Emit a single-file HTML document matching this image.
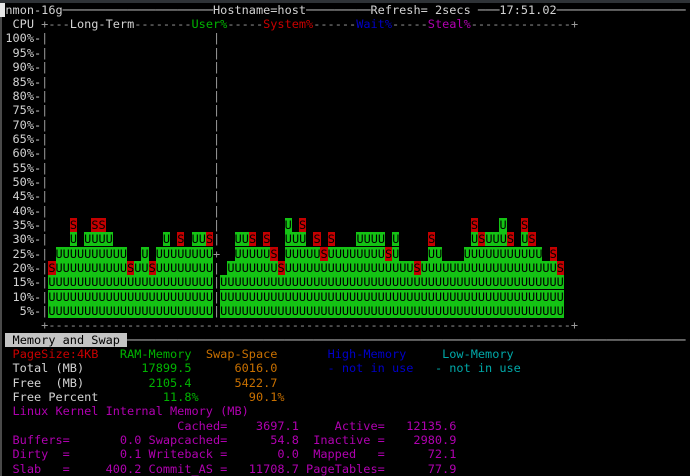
<!DOCTYPE html>
<html><head><meta charset="utf-8">
<style>
html,body{margin:0;padding:0;background:#000;width:690px;height:476px;overflow:hidden;position:relative}
pre{position:absolute;left:-1.8px;top:2.8px;margin:0;font-family:"DejaVu Sans Mono","Liberation Mono",monospace;font-size:11.9px;line-height:14.34px;color:#d2d2d2;white-space:pre}
.g{background:#14c314;color:#000}
.r{background:#c40000;color:#000}
.tg{color:#00b400}
.tr{color:#c80000}
.to{color:#c87000}
.tb{color:#0000c8}
.tc{color:#00a8a8}
.tm{color:#b000b0}
.ln{color:#bdbdbd}
.dm{color:#9a9a9a}
.lab{background:#c4c4c4;color:#000}
.cur{background:#e8e8e8}
b{font-weight:normal}
#top{position:absolute;left:0;top:0;width:690px;height:3px;background:#2e3236}
#lft{position:absolute;left:0;top:3px;width:2px;height:473px;background:#4a4a4a}
</style></head><body>
<div id="top"></div>
<div id="lft"></div>
<pre><b class="cur"> </b>nmon-16g<b class="ln">─────────────────────</b>Hostname=host<b class="ln">─────────</b>Refresh= 2secs <b class="ln">───</b>17:51.02<b class="ln">──────────────────</b>
  CPU <b class="dm">+---</b>Long-Term<b class="dm">--------</b><b class="tg">User%</b><b class="dm">-----</b><b class="tr">System%</b><b class="dm">------</b><b class="tb">Wait%</b><b class="dm">-----</b><b class="tm">Steal%</b><b class="dm">--------------+</b>
 100%-<b class="dm">|</b>                       <b class="dm">|</b>
  95%-<b class="dm">|</b>                       <b class="dm">|</b>
  90%-<b class="dm">|</b>                       <b class="dm">|</b>
  85%-<b class="dm">|</b>                       <b class="dm">|</b>
  80%-<b class="dm">|</b>                       <b class="dm">|</b>
  75%-<b class="dm">|</b>                       <b class="dm">|</b>
  70%-<b class="dm">|</b>                       <b class="dm">|</b>
  65%-<b class="dm">|</b>                       <b class="dm">|</b>
  60%-<b class="dm">|</b>                       <b class="dm">|</b>
  55%-<b class="dm">|</b>                       <b class="dm">|</b>
  50%-<b class="dm">|</b>                       <b class="dm">|</b>
  45%-<b class="dm">|</b>                       <b class="dm">|</b>
  40%-<b class="dm">|</b>                       <b class="dm">|</b>
  35%-<b class="dm">|</b>   <b class="r">S</b>  <b class="r">SS</b>               <b class="dm">|</b>         <b class="g">U</b> <b class="r">S</b>                       <b class="r">S</b>   <b class="g">U</b>  <b class="r">S</b>
  30%-<b class="dm">|</b>   <b class="g">U</b> <b class="g">UUUU</b>       <b class="g">U</b> <b class="r">S</b> <b class="g">UU</b><b class="r">S</b><b class="dm">|</b>  <b class="g">UU</b><b class="r">S</b> <b class="r">S</b>  <b class="g">UUU</b> <b class="r">S</b> <b class="r">S</b>   <b class="g">UUUU</b> <b class="g">U</b>    <b class="r">S</b>     <b class="g">U</b><b class="r">S</b><b class="g">UUU</b><b class="r">S</b> <b class="g">U</b><b class="r">S</b>
  25%-<b class="dm">|</b> <b class="g">UUUUUUUUUU</b>  <b class="g">U</b> <b class="g">UUUUUUUU</b><b class="dm">+</b>  <b class="g">UUUUU</b><b class="r">S</b> <b class="g">UUUUU</b><b class="r">S</b><b class="g">UUUUUUUU</b><b class="r">S</b><b class="g">U</b>    <b class="g">UU</b>   <b class="g">UUUUUUUUUUU</b> <b class="r">S</b>
  20%-<b class="dm">|</b><b class="r">S</b><b class="g">UUUUUUUUUU</b><b class="r">S</b><b class="g">UU</b><b class="r">S</b><b class="g">UUUUUUUU</b><b class="dm">|</b> <b class="g">UUUUUUU</b><b class="r">S</b><b class="g">UUUUUUUUUUUUUUUUUU</b><b class="r">S</b><b class="g">UUUUUUUUUUUUUUUUUUU</b><b class="r">S</b>
  15%-<b class="dm">|</b><b class="g">UUUUUUUUUUUUUUUUUUUUUUU</b><b class="dm">|</b><b class="g">UUUUUUUUUUUUUUUUUUUUUUUUUUUUUUUUUUUUUUUUUUUUUUUU</b>
  10%-<b class="dm">|</b><b class="g">UUUUUUUUUUUUUUUUUUUUUUU</b><b class="dm">|</b><b class="g">UUUUUUUUUUUUUUUUUUUUUUUUUUUUUUUUUUUUUUUUUUUUUUUU</b>
   5%-<b class="dm">|</b><b class="g">UUUUUUUUUUUUUUUUUUUUUUU</b><b class="dm">|</b><b class="g">UUUUUUUUUUUUUUUUUUUUUUUUUUUUUUUUUUUUUUUUUUUUUUUU</b>
      <b class="dm">+-------------------------------------------------------------------------+</b>
 <b class="lab"> Memory and Swap </b><b class="ln">──────────────────────────────────────────────────────────────────────────────</b>
  <b class="tr">PageSize:4KB</b>   <b class="tg">RAM-Memory</b>  <b class="to">Swap-Space</b>       <b class="tb">High-Memory</b>     <b class="tc">Low-Memory</b>
  Total (MB)        <b class="tg">17899.5</b>      <b class="to">6016.0</b>       <b class="tb">- not in use</b>   <b class="tc">- not in use</b>
  Free  (MB)         <b class="tg">2105.4</b>      <b class="to">5422.7</b>
  Free Percent         <b class="tg">11.8%</b>       <b class="to">90.1%</b>
<b class="tm">  Linux Kernel Internal Memory (MB)
                         Cached=    3697.1     Active=   12135.6
  Buffers=       0.0 Swapcached=      54.8  Inactive =    2980.9
  Dirty  =       0.1 Writeback =       0.0  Mapped   =      72.1
  Slab   =     400.2 Commit_AS =   11708.7 PageTables=      77.9</b>
</pre>
</body></html>
